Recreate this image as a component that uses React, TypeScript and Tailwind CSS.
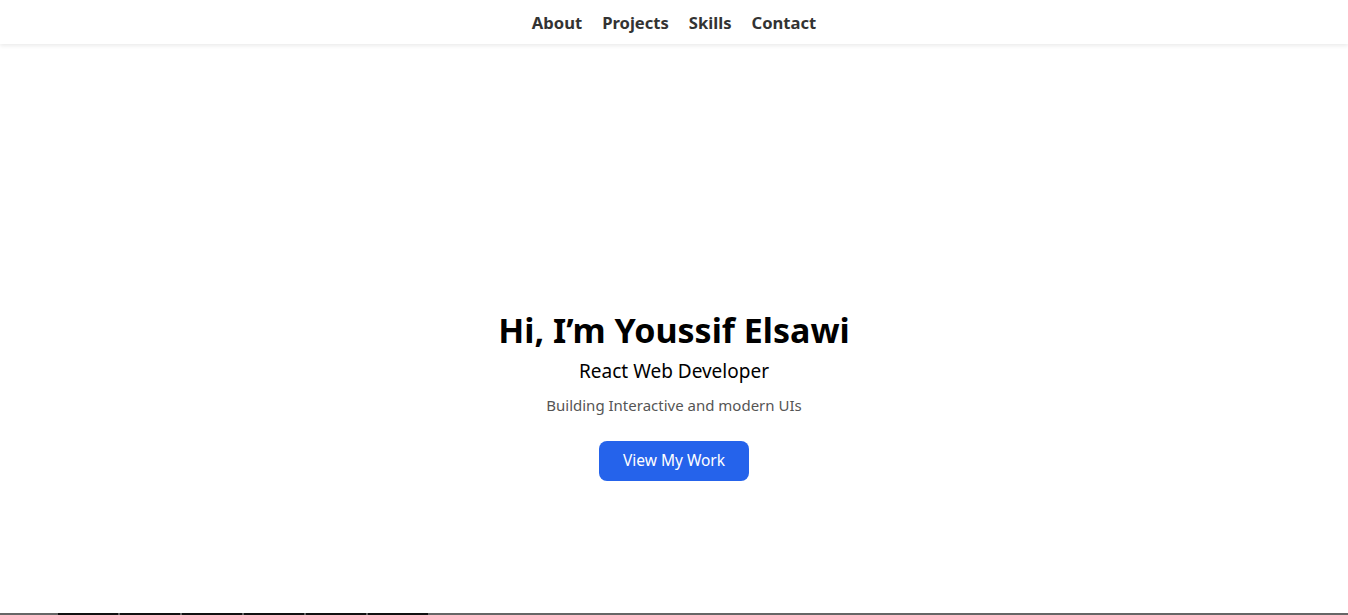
import React from 'react';

const navLinks = ['About', 'Projects', 'Skills', 'Contact'];

const Navbar: React.FC = () => (
  <header className="h-11 bg-white shadow-[0_2px_4px_rgba(0,0,0,0.08)] flex items-center justify-center relative z-10">
    <nav className="flex items-center gap-5 pt-[2px]">
      {navLinks.map(link => (
        <a key={link} href={`#${link.toLowerCase()}`} className="text-[16.6px] font-bold text-[#333]">
          {link}
        </a>
      ))}
    </nav>
  </header>
);

const Hero: React.FC = () => (
  <section className="flex flex-col items-center text-center pt-[266px] h-[569px]">
    <h1 className="text-[34px] leading-[40px] font-bold text-black">Hi, I’m Youssif Elsawi</h1>
    <p className="text-[19px] leading-7 text-black mt-[7px]">React Web Developer</p>
    <p className="text-[15px] leading-6 text-[#555] mt-[8px]">Building Interactive and modern UIs</p>
    <button className="mt-[24px] h-10 px-6 rounded-lg bg-[#2563eb] text-white text-[15.5px]">
      View My Work
    </button>
  </section>
);

export default function App() {
  return (
    <div className="min-h-screen bg-white font-['Noto_Sans',sans-serif]">
      <Navbar />
      <Hero />
      <div className="border-t-2 border-[#666] flex gap-[2px] pl-[58px]">
        {[0, 1, 2, 3, 4, 5].map(i => (
          <div key={i} className="w-[60px] h-[2px] -mt-[2px] bg-[#111]" />
        ))}
      </div>
    </div>
  );
}
